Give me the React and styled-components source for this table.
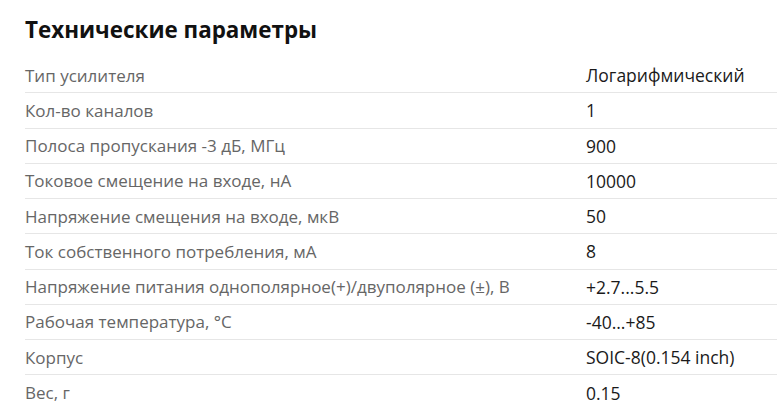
import React from "react";
import styled, { createGlobalStyle } from "styled-components";

const Global = createGlobalStyle`
  html, body { margin: 0; padding: 0; background: #fff; }
  body { font-family: "Open Sans", "Noto Sans", sans-serif; }
`;

const Section = styled.section`
  padding: 0 0 0 25px;
  width: 777px;
  box-sizing: border-box;
`;

const Title = styled.h2`
  margin: 0;
  padding-top: 14px;
  height: 58px;
  box-sizing: border-box;
  font-size: 22.4px;
  line-height: 32px;
  font-weight: 700;
  color: #111;
`;

const Table = styled.div`
  display: flex;
  flex-direction: column;
`;

const Row = styled.div`
  display: grid;
  grid-template-columns: 561px 1fr;
  align-items: center;
  height: 35.25px;
  box-sizing: border-box;
  border-bottom: ${(p) => (p.$last ? "none" : "1px solid #e6e6e6")};
`;

const Label = styled.div`
  color: #666;
  font-size: 17px;
  white-space: nowrap;
`;

const Value = styled.div`
  color: #1a1a1a;
  font-size: 17.5px;
  white-space: nowrap;
`;

const data = [
  ["Тип усилителя", "Логарифмический"],
  ["Кол-во каналов", "1"],
  ["Полоса пропускания -3 дБ, МГц", "900"],
  ["Токовое смещение на входе, нА", "10000"],
  ["Напряжение смещения на входе, мкВ", "50"],
  ["Ток собственного потребления, мА", "8"],
  ["Напряжение питания однополярное(+)/двуполярное (±), В", "+2.7...5.5"],
  ["Рабочая температура, °С", "-40...+85"],
  ["Корпус", "SOIC-8(0.154 inch)"],
  ["Вес, г", "0.15"],
];

export default function App() {
  return (
    <>
      <Global />
      <Section>
        <Title>Технические параметры</Title>
        <Table>
          {data.map(([l, v], i) => (
            <Row key={i} $last={i === data.length - 1}>
              <Label>{l}</Label>
              <Value>{v}</Value>
            </Row>
          ))}
        </Table>
      </Section>
    </>
  );
}
